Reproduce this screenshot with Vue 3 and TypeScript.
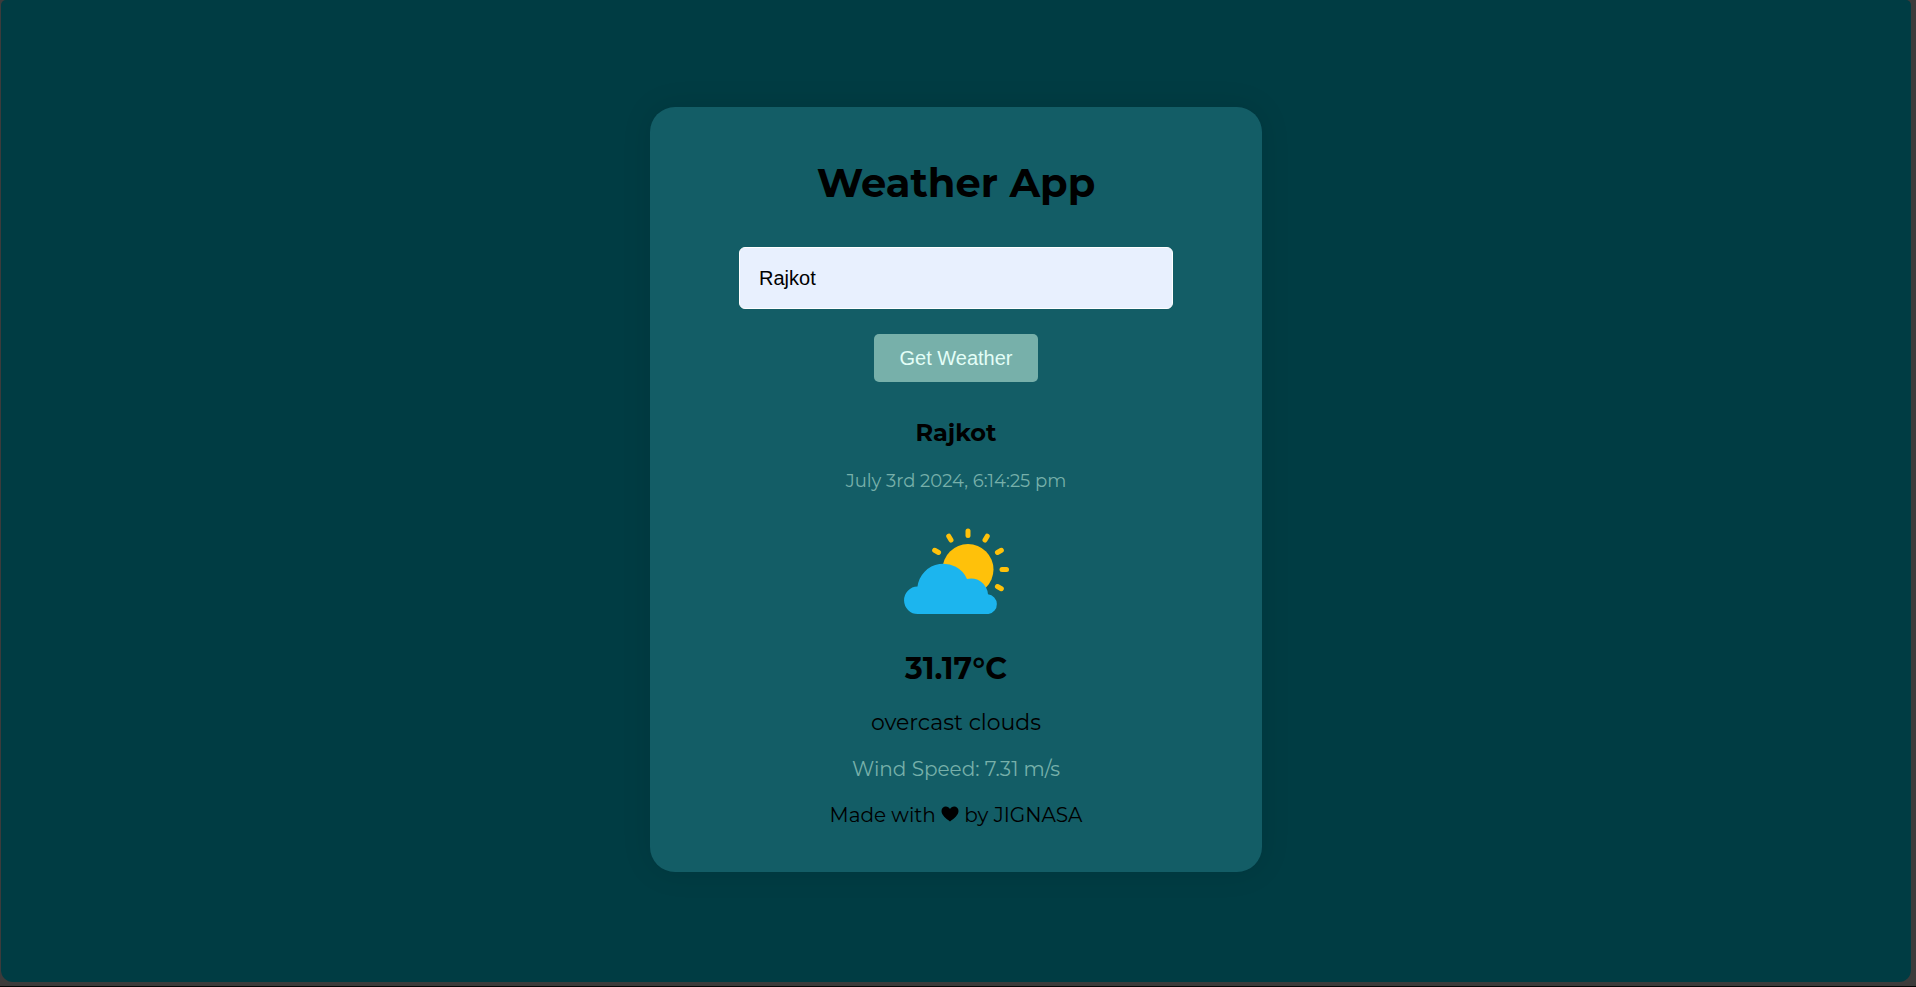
<script setup lang="ts">
import { ref } from 'vue'

interface Weather {
  name: string
  date: string
  temperature: number
  description: string
  wind: number
}

const city = ref('Rajkot')
const weather = ref<Weather>({
  name: 'Rajkot',
  date: 'July 3rd 2024, 6:14:25 pm',
  temperature: 31.17,
  description: 'overcast clouds',
  wind: 7.31,
})

function getWeather() {
  weather.value = { ...weather.value, name: city.value }
}

const rays = [-60, -30, 0, 30, 60, 90, 120]
</script>

<template>
  <div class="frame">
    <main class="stage">
      <section class="card">
        <h1>Weather App</h1>
        <form @submit.prevent="getWeather">
          <input v-model="city" type="text" aria-label="City" />
          <button type="submit">Get Weather</button>
        </form>
        <h2>{{ weather.name }}</h2>
        <p class="date">{{ weather.date }}</p>
        <svg class="icon" viewBox="0 0 130 110" role="img" aria-label="Partly cloudy">
          <circle cx="77" cy="54.5" r="25.5" fill="#ffc10a" />
          <rect
            v-for="angle in rays"
            :key="angle"
            x="74.5"
            y="13.5"
            width="5"
            height="9.5"
            rx="2.5"
            fill="#ffc10a"
            :transform="`rotate(${angle} 77 54.5)`"
          />
          <path
            fill="#1cb5ee"
            d="M27 99a13.700 13.700 0 0 1 -0.500-27.400A26 26 0 0 1 76 64A17 17 0 0 1 97 79.200A10 10 0 0 1 97.500 99Z"
          />
        </svg>
        <p class="temperature">{{ weather.temperature }}°C</p>
        <p class="description">{{ weather.description }}</p>
        <p class="wind">Wind Speed: {{ weather.wind }} m/s</p>
        <footer>
          Made with
          <svg class="heart" viewBox="0 0 18 16" role="img" aria-label="love">
            <path d="M9 15.500C5 12.500.5 9 .5 5 .5 2.200 2.500.5 4.800.5 6.700.5 8.200 1.500 9 3 9.800 1.500 11.300.5 13.200.5 15.500.5 17.500 2.200 17.500 5c0 4-4.500 7.500-8.500 10.500Z" />
          </svg>
          by JIGNASA
        </footer>
      </section>
    </main>
  </div>
</template>

<style>
body {
  margin: 0;
  background: #3c3b3b;
}
</style>

<style scoped>
.frame {
  box-sizing: border-box;
  min-height: 100vh;
  padding: 0 5px 4px 1px;
  border-bottom: 1px solid #050505;
  display: flex;
  font-family: Montserrat, Inter, sans-serif;
  color: #000;
}
.stage {
  flex: 1;
  display: flex;
  justify-content: center;
  align-items: center;
  padding-bottom: 3px;
  border-radius: 5px 5px 12px 12px;
  background: #003c43;
}
.card {
  box-sizing: border-box;
  width: 32%;
  min-width: 480px;
  padding: 48px 0 43px;
  border-radius: 25px;
  background: #135d66;
  box-shadow: 0 0 30px rgba(0, 0, 0, 0.1);
  display: flex;
  flex-direction: column;
  align-items: center;
  text-align: center;
}
h1,
h2,
p {
  margin: 0;
}
h1 {
  font-size: 40px;
  line-height: 56px;
}
form {
  align-self: stretch;
  margin-top: 36px;
  display: flex;
  flex-direction: column;
  align-items: center;
  gap: 25px;
}
input {
  box-sizing: border-box;
  width: 71%;
  height: 62px;
  padding: 0 19px;
  border: 1px solid #fff;
  border-radius: 6px;
  background: #e8f0fe;
  color: #000;
  font: 20px "Liberation Sans", Arial, sans-serif;
}
button {
  height: 48px;
  padding: 0 25px;
  border: 0;
  border-radius: 5px;
  background: #77b0aa;
  color: #e3fef7;
  font: 20px "Liberation Sans", Arial, sans-serif;
}
h2 {
  margin-top: 35px;
  font-size: 24px;
  line-height: 32px;
}
.date {
  margin-top: 20px;
  font-size: 18px;
  line-height: 24px;
  color: #77b0aa;
}
.icon {
  width: 130px;
  height: 110px;
  margin-top: 22px;
}
.temperature {
  margin-top: 24px;
  font-size: 30px;
  font-weight: 700;
  line-height: 40px;
}
.description {
  margin-top: 18px;
  font-size: 22px;
  line-height: 32px;
}
.wind {
  margin-top: 16px;
  font-size: 20px;
  line-height: 28px;
  color: #77b0aa;
}
footer {
  margin-top: 18px;
  font-size: 20px;
  line-height: 28px;
}
.heart {
  width: 18px;
  height: 16px;
}
</style>
